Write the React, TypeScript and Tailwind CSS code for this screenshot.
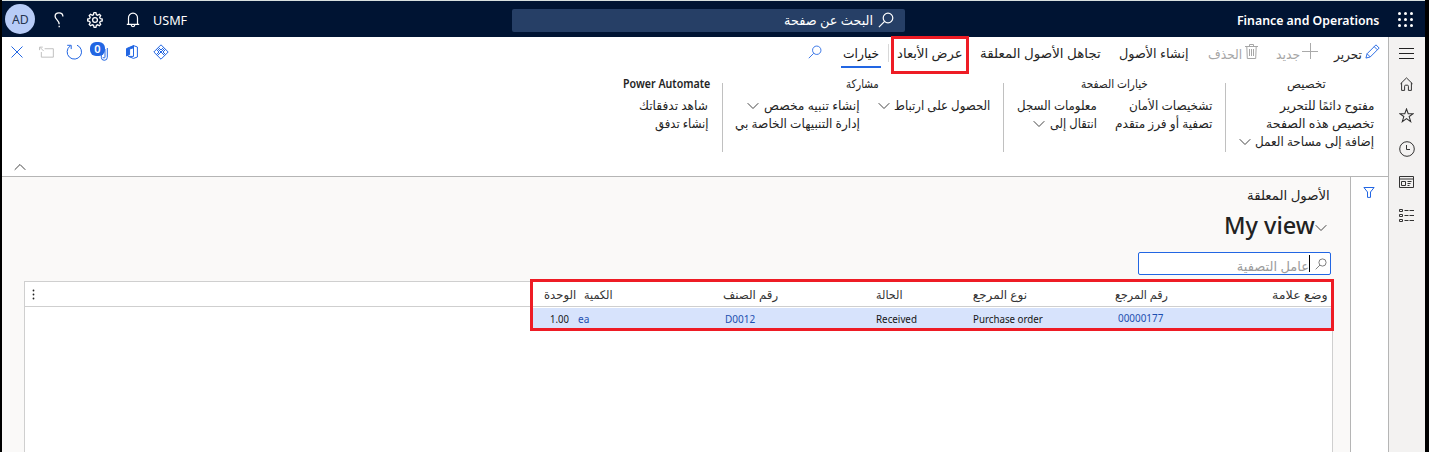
import { useLayoutEffect, useRef } from "react";
import type { ReactNode } from "react";

/* One line of text, stretched or condensed to the width of its column. */
function Fit({ children, className = "", ltr = false }: { children: ReactNode; className?: string; ltr?: boolean }) {
  const ref = useRef<HTMLSpanElement>(null);
  useLayoutEffect(() => {
    const el = ref.current;
    if (!el || !el.parentElement) return;
    el.style.transform = `scaleX(${el.parentElement.clientWidth / el.offsetWidth})`;
  }, []);
  return (
    <div dir={ltr ? "ltr" : "rtl"} className={"shrink-0 " + className}>
      <span ref={ref} className={"inline-block whitespace-nowrap " + (ltr ? "origin-left" : "origin-right")}>
        {children}
      </span>
    </div>
  );
}

function Icon({ className = "", box = "0 0 16 16", sw = 1, children }: { className?: string; box?: string; sw?: number; children: ReactNode }) {
  return (
    <svg viewBox={box} className={"shrink-0 " + className} fill="none" stroke="currentColor" strokeWidth={sw}>
      {children}
    </svg>
  );
}

const Chevron = ({ className = "" }: { className?: string }) => (
  <Icon box="0 0 12 8" className={"h-[8px] w-[12px] text-[#444] " + className}>
    <path d="M.7 1.2 6 6.5l5.3-5.3" />
  </Icon>
);

const Search = ({ className = "", sw = 1 }: { className?: string; sw?: number }) => (
  <Icon className={className} sw={sw}>
    <circle cx="10" cy="6" r="4.8" />
    <path d="M6.6 9.4.9 15.1" />
  </Icon>
);

function TopBar() {
  return (
    <header className="flex h-[37px] items-center border-t border-[#d8e0df] bg-[#001433] text-white">
      <div className="ml-[3px] flex size-[30px] items-center justify-center rounded-full bg-[#b8ccf7] text-[#25344f]">
        <Fit ltr className="w-[17px] text-[13px] leading-[18px]">AD</Fit>
      </div>
      <Icon box="0 0 10 16" sw={1.3} className="ml-[19px] mt-[2px] h-[16px] w-[10px]">
        <path d="M8.9 4.4C8.9 2 7.4.8 5 .8S1.1 2.2 1.1 4.2c0 3.6 4.1 3.8 4.1 8" />
        <path d="M5.2 13.7v1.6" />
      </Icon>
      <Icon box="0 0 16 16" sw={1.3} className="ml-[23px] mt-[2px] size-[16px]">
        <path d="m6.7 1 .4-.3h1.8l.5 2 1.2.5 1.8-1 1.3 1.3-1 1.8.5 1.2 2 .6v1.8l-2 .6-.5 1.2 1 1.8-1.3 1.3-1.8-1-1.2.5-.5 2H7.1l-.6-2-1.2-.5-1.8 1-1.3-1.3 1-1.8-.5-1.2-2-.6V7.1l2-.6.5-1.2-1-1.8 1.3-1.3 1.8 1 1.2-.5z" />
        <circle cx="8" cy="8" r="2.4" />
      </Icon>
      <Icon box="0 0 14 16" sw={1.2} className="ml-[23px] mt-[2px] h-[16px] w-[14px]">
        <path d="M2.5 12V6A4.5 4.5 0 0 1 7 1.2 4.5 4.5 0 0 1 11.5 6v6M.8 12.3h12.4M5.2 12.8a1.8 1.8 0 0 0 3.6 0" />
      </Icon>
      <Fit ltr className="ml-[13px] mt-[2px] w-[34px] text-[13px] leading-[18px]">USMF</Fit>
      <div dir="rtl" className="ml-[325px] mt-[2px] flex h-[23px] w-[393px] items-center rounded-[2px] bg-[#263f66]">
        <Search sw={1.2} className="mr-[11px] size-[16px]" />
        <Fit className="mr-[5px] w-[89px] text-[13px] leading-[20px]">البحث عن صفحة</Fit>
      </div>
      <Fit ltr className="ml-[332px] mt-[1px] w-[142px] text-[13px] font-semibold leading-[18px]">Finance and Operations</Fit>
      <svg viewBox="0 0 15 15" className="ml-[19px] mt-[1px] size-[15px]" fill="white">
        {[1.5, 7.5, 13.5].map((y) => [1.5, 7.5, 13.5].map((x) => <circle key={`${x}-${y}`} cx={x} cy={y} r="1.5" />))}
      </svg>
    </header>
  );
}

function CommandBar() {
  return (
    <div className="flex h-[36px] items-start text-[#252525]">
      <div className="flex h-[30px] items-center text-[#2266e3]">
        <Icon box="0 0 12 12" className="ml-[9px] size-[12px]"><path d="m.5.5 11 11M11.5.5l-11 11" /></Icon>
        <Icon box="0 0 16 12" className="ml-[16px] h-[12px] w-[15px] text-[#bdbdbd]"><path d="M6 2.5h9.3v9H2.5V6M5 5 1 1M.6 4V.8H4" /></Icon>
        <Icon className="ml-[12px] size-[16px]"><path d="M4.2 2A7.2 7.2 0 1 0 11 1.2M1.2 1.3h4v3.8" /></Icon>
        <div className="relative ml-[8px] h-[18px] w-[18px]">
          <Icon box="0 0 8 14" className="absolute right-0 top-[4px] h-[14px] w-[8px]"><path d="M7.3 1v9.3a3 3 0 0 1-6 0V4M5 2v8a1 1 0 0 1-2 0" /></Icon>
          <div className="absolute left-0 -top-px flex h-[14px] w-[15px] items-center justify-center rounded-[6px] bg-[#2266e3] text-[11px] font-semibold text-white">0</div>
        </div>
        <Icon box="0 0 12 14" className="ml-[18px] h-[14px] w-[12px]">
          <path d="M7.5.6 11.4 2v10l-3.9 1.4-5.3-2H7.5z" />
          <path d="M.5 3.6 7.5.6v2.2L3.6 4v5.6L.5 11z" fill="currentColor" />
        </Icon>
        <Icon className="ml-[15px] size-[16px]"><path d="M8 .8 15.2 8 8 15.2.8 8zM4.4 4.4 11.6 11.6M11.6 4.4 4.4 11.6M5.4 3.4 8 6l2.6-2.6M3.4 10.6 6 8 3.4 5.4M12.6 5.4 10 8l2.6 2.6" /></Icon>
      </div>
      <div dir="rtl" className="flex flex-1 items-start pt-[7px] text-[13px] leading-[20px]">
        <Icon className="mr-[8px] size-[15px] text-[#2266e3]"><path d="m1 15 1.2-4.6L11.7.9l3.4 3.4-9.5 9.5zM2.2 10.4l3.4 3.4M9.8 2.8l3.4 3.4" /></Icon>
        <Fit className="mr-[3px] w-[28px]">تحرير</Fit>
        <Icon className="mr-[16px] -mt-px size-[16px] text-[#aaa]"><path d="M8.5 0v16M0 8.5h16" /></Icon>
        <Fit className="mr-[2px] w-[24px] text-[#a6a6a6]">جديد</Fit>
        <Icon box="0 0 13 15" className="mr-[18px] h-[15px] w-[13px] text-[#a6a6a6]"><path d="M0 2.5h13M4.5 2.3V.5h4v1.8M1.8 2.5l.5 12h8.4l.5-12M4.5 5v7M6.5 5v7M8.5 5v7" /></Icon>
        <Fit className="mr-[3px] w-[34px] text-[#a6a6a6]">الحذف</Fit>
        <Fit className="-mt-px mr-[19px] w-[70px]">إنشاء الأصول</Fit>
        <Fit className="-mt-px mr-[18px] w-[121px]">تجاهل الأصول المعلقة</Fit>
        <div className="relative mr-[17px]">
          <Fit className="-mt-px w-[66px]">عرض الأبعاد</Fit>
          <div className="absolute -left-[6px] -top-[8px] h-[38px] w-[78px] border-[3px] border-[#ee1c25]" />
        </div>
        <div className="mr-[8px] h-[18px] w-px bg-[#d8d8d8]" />
        <div className="mr-[7px] flex h-[24px] w-[40px] justify-center border-b-2 border-[#2266e3]">
          <Fit className="-mt-px w-[36px] font-medium text-[#151515]">خيارات</Fit>
        </div>
        <Search className="mr-[19px] mt-[1px] size-[14px] text-[#2266e3]" />
      </div>
    </div>
  );
}

const Divider = () => <div className="mt-[6px] h-[69px] w-px shrink-0 bg-[#c0c0c0]" />;

function Ribbon() {
  return (
    <div dir="rtl" className="flex h-[104px] border-b border-[#b5b5b5] pt-[4px] text-[12.5px] leading-[18px] text-[#242424]">
      <section className="mr-[14px] w-[148px]">
        <Fit className="mr-[48px] w-[39px] text-[12px] leading-[14px] font-medium">تخصيص</Fit>
        <div className="pt-[6px]">
          <Fit className="w-[94px]">مفتوح دائمًا للتحرير</Fit>
          <Fit className="w-[108px]">تخصيص هذه الصفحة</Fit>
          <div className="flex items-center gap-[4px]">
            <Fit className="w-[119px]">إضافة إلى مساحة العمل</Fit>
            <Chevron />
          </div>
        </div>
      </section>
      <Divider />
      <section className="mr-[13px] w-[208px]">
        <Fit className="mr-[64px] w-[67px] text-[12px] leading-[14px] font-medium">خيارات الصفحة</Fit>
        <div className="flex gap-[18px] pt-[6px]">
          <div className="w-[97px]">
            <Fit className="w-[83px]">تشخيصات الأمان</Fit>
            <Fit className="w-[97px]">تصفية أو فرز متقدم</Fit>
          </div>
          <div>
            <Fit className="w-[80px]">معلومات السجل</Fit>
            <div className="flex items-center gap-[5px]">
              <Fit className="w-[47px]">انتقال إلى</Fit>
              <Chevron />
            </div>
          </div>
        </div>
      </section>
      <Divider />
      <section className="mr-[13px] w-[267px]">
        <Fit className="mr-[111px] w-[33px] text-[12px] leading-[14px] font-medium">مشاركة</Fit>
        <div className="flex pt-[6px]">
          <div className="flex h-[18px] w-[130px] items-center gap-[4px]">
            <Fit className="w-[96px]">الحصول على ارتباط</Fit>
            <Chevron />
          </div>
          <div>
            <div className="flex items-center gap-[5px]">
              <Fit className="w-[96px]">إنشاء تنبيه مخصص</Fit>
              <Chevron />
            </div>
            <Fit className="w-[125px]">إدارة التنبيهات الخاصة بي</Fit>
          </div>
        </div>
      </section>
      <Divider />
      <section className="mr-[12px] w-[90px]">
        <Fit ltr className="w-[87px] text-[12px] font-semibold leading-[14px]">Power Automate</Fit>
        <div className="mr-[2px] pt-[6px]">
          <Fit className="w-[69px]">شاهد تدفقاتك</Fit>
          <Fit className="w-[53px]">إنشاء تدفق</Fit>
        </div>
      </section>
      <Chevron className="mr-auto ml-[12px] mt-[86px] rotate-180" />
    </div>
  );
}

function Grid() {
  return (
    <div className="relative ml-[22px] mt-[6px] flex w-[1309px] flex-1 flex-col border border-b-0 border-[#cfcfcf] bg-white">
      <div className="flex h-[25px] shrink-0 items-center border-b border-[#cfcfcf] text-[12px] leading-[18px] text-[#333]">
        <svg viewBox="0 0 3 12" className="ml-[7px] mt-[2px] h-[12px] w-[3px]" fill="#222">
          <circle cx="1.5" cy="1.5" r=".9" /><circle cx="1.5" cy="5.5" r=".9" /><circle cx="1.5" cy="9.5" r=".9" />
        </svg>
        <div className="mt-[2px] flex">
          <Fit className="ml-[509px] w-[32px]">الوحدة</Fit>
          <Fit className="ml-[8px] w-[29px]">الكمية</Fit>
          <Fit className="ml-[110px] w-[55px]">رقم الصنف</Fit>
          <Fit className="ml-[98px] w-[26px]">الحالة</Fit>
          <Fit className="ml-[71px] w-[54px]">نوع المرجع</Fit>
          <Fit className="ml-[88px] w-[53px]">رقم المرجع</Fit>
          <Fit className="ml-[104px] w-[56px]">وضع علامة</Fit>
        </div>
      </div>
      <div className="ml-[508px] mt-px flex h-[22px] shrink-0 items-center bg-[#d7e3fc] text-[11px] leading-[16px] text-[#151515]">
        <Fit ltr className="-mt-px ml-[17px] w-[19px]">1.00</Fit>
        <Fit ltr className="-mt-px ml-[9px] w-[11px] text-[#1c4fb0]">ea</Fit>
        <Fit ltr className="ml-[136px] w-[30px] text-[#1c4fb0]">D0012</Fit>
        <Fit ltr className="ml-[121px] w-[41px]">Received</Fit>
        <Fit ltr className="ml-[56px] w-[70px]">Purchase order</Fit>
        <Fit ltr className="-mt-[2px] ml-[75px] w-[45px] text-[#1c4fb0]">00000177</Fit>
      </div>
      <div className="absolute -right-[2px] -top-[3px] h-[52px] w-[804px] border-[3px] border-[#ee1c25]" />
    </div>
  );
}

function Workspace() {
  return (
    <div className="flex flex-1">
      <main className="flex w-[1348px] flex-col bg-[#faf9f8]">
        <div dir="rtl" className="pr-[20px] pt-[8px] text-[#222]">
          <Fit className="w-[83px] text-[13px] leading-[20px]">الأصول المعلقة</Fit>
          <div className="mr-[3px] mt-px flex h-[38px] items-center">
            <Chevron className="mt-[5px] h-[7px] w-[12px]" />
            <Fit ltr className="w-[91px] text-[24px] font-medium leading-[38px]">My view</Fit>
          </div>
          <div className="-mr-[1px] mt-[8px] flex h-[23px] w-[193px] items-center rounded-[2px] border border-[#2266e3] bg-white">
            <Search className="mr-[3px] size-[12px] text-[#555]" />
            <div className="mr-[5px] h-[17px] w-px bg-black" />
            <Fit className="mt-[4px] w-[72px] text-[13px] leading-[20px] text-[#9b9b9b]">عامل التصفية</Fit>
          </div>
        </div>
        <Grid />
      </main>
      <aside className="flex w-[38px] justify-center border-l border-[#b5b5b5] bg-white pr-px pt-[10px]">
        <Icon box="0 0 12 11" className="h-[11px] w-[12px] text-[#2266e3]"><path d="M.9.5h10.2L7.5 5v5.4h-3V5z" /></Icon>
      </aside>
    </div>
  );
}

function SideNav() {
  return (
    <nav className="flex w-[37px] flex-col items-center border-l border-[#b5b5b5] bg-[#f3f2f1] pr-px text-[#333]">
      <Icon box="0 0 15 11" className="mt-[11px] h-[11px] w-[15px] text-[#222]"><path d="M0 .5h15M0 5.5h15M0 10.5h15" /></Icon>
      <Icon box="0 0 13 14" className="mt-[18px] h-[14px] w-[13px]"><path d="M.5 6.8 6.5.9l6 5.9M1.6 5.9v7.5h3V9.2q0-1 1-1h1.8q1 0 1 1v4.2h3V5.9" /></Icon>
      <Icon box="0 0 14 14" className="mt-[17px] size-[15px]"><path d="m7 .9 1.6 4.4h4.6L9.5 8l1.4 4.7L7 9.9l-3.9 2.8L4.5 8 .8 5.3h4.6z" /></Icon>
      <Icon className="mt-[18px] size-[16px]"><circle cx="8" cy="8" r="7.3" /><path d="M7.5 4v4.5H11" /></Icon>
      <Icon box="0 0 15 12" className="mt-[19px] h-[12px] w-[15px]"><path d="M.5.5h14v11H.5zM.5 3h14M2.5 5.5h4v4h-4zM8.5 5.5h4M8.5 7.5h3M8.5 9.5h2" /></Icon>
      <Icon box="0 0 15 13" className="mt-[21px] h-[13px] w-[15px]"><path d="M.5.5h3v2h-3zM.5 5.5h3v2h-3zM.5 10.5h3v2h-3zM5.5 1.5h4M10.5 1.5H15M5.5 6.5h4M10.5 6.5H15M5.5 11.5h4M10.5 11.5H15" /></Icon>
    </nav>
  );
}

export default function App() {
  return (
    <div className="flex h-[452px] w-[1429px] overflow-hidden bg-black font-['Noto_Sans','DejaVu_Sans',sans-serif]">
      <div className="ml-[2px] flex w-[1423px] flex-col">
        <TopBar />
        <div className="flex min-h-0 flex-1">
          <div className="flex w-[1386px] flex-col bg-white">
            <CommandBar />
            <Ribbon />
            <Workspace />
          </div>
          <SideNav />
        </div>
      </div>
    </div>
  );
}
